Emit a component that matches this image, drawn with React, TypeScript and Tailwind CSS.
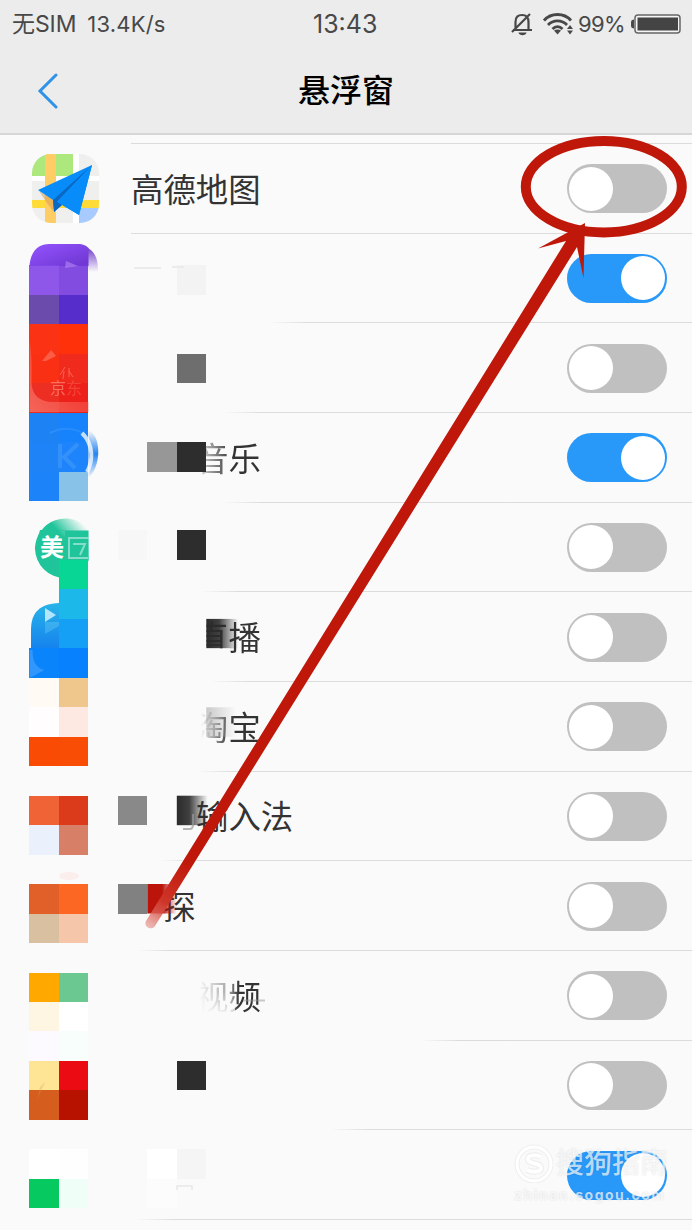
type Row = {
  label: string
  labelClass?: string
  on?: boolean
  line: string
}

const solidLine = 'ml-[131px] bg-[#dcdcdc]'

const rows: Row[] = [
  { label: '高德地图', line: solidLine },
  { label: '', on: true, line: 'ml-[268px] bg-linear-to-r from-transparent to-[#dcdcdc] to-[40px]' },
  { label: '', line: 'ml-[222px] bg-linear-to-r from-transparent to-[#dcdcdc] to-[40px]' },
  {
    label: '音乐',
    labelClass:
      'pl-[65px] bg-linear-to-r from-transparent from-[62px] to-[#333] to-[100px] bg-clip-text text-transparent',
    on: true,
    line: 'ml-[222px] bg-linear-to-r from-transparent to-[#dcdcdc] to-[40px]',
  },
  { label: '', line: 'ml-[200px] bg-linear-to-r from-transparent to-[#dcdcdc] to-[40px]' },
  {
    label: '直播',
    labelClass:
      'pl-[65px] bg-linear-to-r from-transparent from-[75px] to-[#333] to-[76px] bg-clip-text text-transparent',
    line: 'ml-[210px] bg-linear-to-r from-transparent to-[#dcdcdc] to-[40px]',
  },
  {
    label: '淘宝',
    labelClass:
      'pl-[65px] bg-linear-to-r from-transparent from-[70px] to-[#333] to-[98px] bg-clip-text text-transparent',
    line: 'ml-[195px] bg-linear-to-r from-transparent to-[#dcdcdc] to-[40px]',
  },
  { label: '输入法', labelClass: 'pl-[65px]', line: 'ml-[160px] bg-linear-to-r from-transparent to-[#dcdcdc] to-[30px]' },
  { label: '探', labelClass: 'pl-[32px]', line: 'ml-[138px] bg-linear-to-r from-transparent to-[#dcdcdc] to-[30px]' },
  {
    label: '视频',
    labelClass:
      'pl-[65px] bg-linear-to-r from-transparent from-[68px] via-[#333]/40 via-[96px] to-[#333] to-[108px] bg-clip-text text-transparent',
    line: 'ml-[420px] bg-linear-to-r from-transparent to-[#dcdcdc] to-[40px]',
  },
  { label: '', line: 'ml-[330px] bg-linear-to-r from-transparent to-[#dcdcdc] to-[40px]' },
  { label: '', on: true, line: 'ml-[135px] bg-linear-to-r from-transparent to-[#dcdcdc] to-[40px]' },
]

// mosaic cell size
const CELL = 29.47

// [column, row, colour, opacity]
const tiles: [number, number, string, number?][] = [
  [1, 9, '#8245e8', 0.9],
  [2, 9, '#7338dc', 0.9],
  [1, 10, '#6b4bac'],
  [2, 10, '#562ccb'],
  [1, 11, '#fb3213'],
  [2, 11, '#ff310a'],
  [1, 12, '#fa3014'],
  [2, 12, '#f02a1c'],
  [1, 13, '#ed2e22'],
  [2, 13, '#ed2119'],
  [1, 14, '#1d83f5'],
  [2, 14, '#1683fd'],
  [1, 15, '#1d83f7'],
  [2, 15, '#1e84fb'],
  [1, 16, '#1d83f9'],
  [2, 16, '#89c2e8'],
  [2, 19, '#07d694'],
  [2, 20, '#1cb8e9'],
  [2, 21, '#16a0f5'],
  [1, 22, '#0a84fb'],
  [2, 22, '#0781fd'],
  [1, 23, '#fffaf3'],
  [2, 23, '#efc68c'],
  [1, 24, '#fffdfe'],
  [2, 24, '#fde8e2'],
  [1, 25, '#fa4b05'],
  [2, 25, '#f94c04'],
  [1, 27, '#ef6337'],
  [2, 27, '#db3b1b'],
  [1, 28, '#ebf1fc'],
  [2, 28, '#d87f68'],
  [1, 30, '#e1602a'],
  [2, 30, '#fc6823'],
  [1, 31, '#d8c0a0'],
  [2, 31, '#f5c6aa'],
  [1, 33, '#ffa900'],
  [2, 33, '#6cc891'],
  [1, 34, '#fff5e3'],
  [2, 34, '#ffffff'],
  [1, 35, '#fcfaff'],
  [2, 35, '#f8fefb'],
  [1, 36, '#fde595'],
  [2, 36, '#eb0b12'],
  [1, 37, '#d55d1e'],
  [2, 37, '#b71100'],
  [1, 39, '#ffffff'],
  [2, 39, '#fffefe'],
  [1, 40, '#06c960'],
  [2, 40, '#effff8'],
  [6, 9, '#f3f3f3'],
  [6, 12, '#6e6e6e'],
  [5, 15, '#979797'],
  [6, 15, '#2d2d2d'],
  [4, 18, '#f7f7f7'],
  [6, 18, '#2d2d2d'],
  [4, 27, '#898989'],
  [4, 30, '#818181'],
  [6, 36, '#2d2d2d'],
  [5, 39, '#ffffff'],
  [5, 40, '#fcfcfc'],
  [6, 39, '#f5f5f5'],
]

function Toggle({ on }: { on?: boolean }) {
  return (
    <div
      className={
        on
          ? 'flex h-[49px] w-[100px] items-center justify-end rounded-full bg-[#2898f9] px-[2px]'
          : 'flex h-[49px] w-[100px] items-center justify-start rounded-full bg-[#c0c0c0] px-[2px]'
      }
    >
      <div className="size-[44px] rounded-full bg-white" />
    </div>
  )
}

function MapIcon() {
  return (
    <svg className="ml-[32px] h-[69px] w-[67px]" viewBox="0 0 67 69">
      <defs>
        <clipPath id="map-clip">
          <rect width="67" height="69" rx="19" />
        </clipPath>
      </defs>
      <g clipPath="url(#map-clip)">
        <rect width="67" height="69" fill="#efefed" />
        <rect width="42" height="22" fill="#ace87c" />
        <rect y="22" width="67" height="5" fill="#fff" />
        <rect x="0" y="46" width="67" height="8" fill="#ffdb38" />
        <rect x="47" y="54" width="20" height="15" fill="#a7cbff" />
        <path d="M13 0h11v69H13z" fill="#ffcc66" />
        <rect x="41" width="6" height="69" fill="#fff" />
      </g>
      <path d="M7 37l14 9v11l-6-8z" fill="#d69a48" opacity=".5" />
      <path d="M60 11L6 36l15 10 1 12 8-7 17 10z" fill="#078cfa" />
      <path d="M60 11L21 46l1 12 8-7-5-3z" fill="#0868c4" />
      <path d="M60 11L25 47.500l22 13.500z" fill="#078cfa" />
    </svg>
  )
}

function StatusBar() {
  return (
    <div className="relative flex h-[48px] items-center text-[#484848]">
      <span className="ml-[12px] text-[23px] tracking-[-0.1px]">无SIM</span>
      <span className="ml-[11px] text-[22px] tracking-[0.2px]">13.4K/s</span>
      <span className="absolute top-[6px] left-[313px] text-[25px]">13:43</span>
      <svg className="ml-auto h-[24px] w-[22px]" viewBox="0 0 22 24" fill="none" stroke="#484848" strokeWidth="2.200">
        <path d="M4.500 17V10C4.500 5 7 3 11 3c4 0 6.500 2 6.500 7v7M2 18h19M1 20L19 2" />
        <path d="M7.500 20.500h8c-.5 3.500-7.500 3.500-8 0z" fill="#484848" stroke="none" />
      </svg>
      <svg className="ml-[10px] h-[22px] w-[30px]" viewBox="0 0 30 22" fill="none" stroke="#484848" strokeWidth="2.800">
        <path d="M1 7.500C8-.5 21-.5 28 7.500M5 12c5-5.500 14-5.500 19 0M9.500 16c3-3 7-3 10 0" />
        <path d="M11 17.500c2-1.500 5-1.500 7 0l-3.500 4z" fill="#484848" stroke="none" />
        <path d="M24 16l3-4 3 4zM24 17.500l3 4 3-4z" fill="#484848" stroke="none" />
      </svg>
      <span className="ml-[5px] w-[48px] text-[22px] tracking-[-0.7px] whitespace-nowrap">99%</span>
      <svg className="mr-[11px] ml-[5px] h-[20px] w-[50px]" viewBox="0 0 50 20">
        <path d="M3 5.500C0 6 0 7 0 10s0 4 3 4.500z" fill="#484848" />
        <rect x="4" y="1" width="45" height="18" rx="3" fill="#f5f5f5" stroke="#666" strokeWidth="1.500" />
        <rect x="6.500" y="3.500" width="40.500" height="13" fill="#444" />
      </svg>
    </div>
  )
}

/* Censored icons and names, drawn on one mosaic grid */
function Mosaic() {
  return (
    <svg className="absolute inset-0" width="692" height="1230" viewBox="0 0 692 1230">
      <defs>
        <linearGradient id="purple" x1="0" y1="0" x2="1" y2="1">
          <stop offset="0" stopColor="#9453ff" />
          <stop offset="1" stopColor="#6c36cf" />
        </linearGradient>
        <linearGradient id="fade-down" x1="0" y1="0" x2="0" y2="1">
          <stop offset="0" stopColor="#7440cc" />
          <stop offset="1" stopColor="#7440cc" stopOpacity="0" />
        </linearGradient>
        <linearGradient id="green" gradientUnits="userSpaceOnUse" x1="62" y1="536" x2="80" y2="520">
          <stop offset="0" stopColor="#20c49a" />
          <stop offset="1" stopColor="#20c49a" stopOpacity="0" />
        </linearGradient>
        <linearGradient id="dark-fade">
          <stop offset="0" stopColor="#2b2b2b" />
          <stop offset=".4" stopColor="#2b2b2b" stopOpacity=".9" />
          <stop offset="1" stopColor="#2b2b2b" stopOpacity="0" />
        </linearGradient>
        <linearGradient id="gray-fade">
          <stop offset="0" stopColor="#b4b4b4" stopOpacity=".7" />
          <stop offset="1" stopColor="#b4b4b4" stopOpacity="0" />
        </linearGradient>
        <linearGradient id="sky" x1="0" y1="0" x2="0" y2="1">
          <stop offset="0" stopColor="#29b4e8" />
          <stop offset="1" stopColor="#1583ee" />
        </linearGradient>
        <linearGradient id="corner" x1="0" y1="1" x2="1" y2="0">
          <stop offset="0" stopColor="#ff9b91" />
          <stop offset="1" stopColor="#ee2e22" />
        </linearGradient>
        <linearGradient id="blue-edge" x1="0" y1="0" x2="0" y2="1">
          <stop offset="0" stopColor="#2584f0" stopOpacity="0" />
          <stop offset=".5" stopColor="#2584f0" />
          <stop offset="1" stopColor="#2584f0" stopOpacity="0" />
        </linearGradient>
        <linearGradient id="page-fade" x1="0" y1="0" x2="0" y2="1">
          <stop offset="0" stopColor="#fafafa" stopOpacity="0" />
          <stop offset="1" stopColor="#fafafa" stopOpacity=".9" />
        </linearGradient>
      </defs>

      <path d="M29.500 266c1-14 8-22 20-22h28c6 0 9 2 11 4v18z" fill="url(#purple)" />
      <path d="M88 248c8 5 10 12 10 24H88z" fill="url(#fade-down)" />
      <path d="M88.500 430c13 6 13 36 0 48z" fill="url(#blue-edge)" />

      <path d="M35 548a30.500 30.500 0 0 1 53.500-19v32A30.500 30.500 0 0 1 35 548z" fill="url(#green)" />
      <path d="M59 530.500h29.500v30H59zM35 548a30 30 0 0 0 30 30V530H40z" fill="#20c49a" />
      <path d="M31 648v-18c0-18 9-26 28-27v45z" fill="url(#sky)" />

      <g shapeRendering="crispEdges">
        {tiles.map(([col, row, fill, opacity]) => (
          <rect
            key={`${col}-${row}`}
            x={col * CELL}
            y={row * CELL}
            width={CELL}
            height={CELL}
            fill={fill}
            fillOpacity={opacity ?? 1}
          />
        ))}
      </g>

      <path d="M66 261l12 5-13 2z" fill="#b58af2" opacity=".6" />
      <path d="M29.500 340c3 18 2 30 2 42 0 13 8 20 22 20h35v10h-59z" fill="url(#corner)" opacity=".5" />
      <path d="M42 361l9-11 5 6-10 5z" fill="#ff7b66" opacity=".6" />
      <path d="M60 375l5-8M64 371l-1 8M69 368v9M69 371l4 6" stroke="#ff7b66" opacity=".7" fill="none" />
      <text x="50" y="394" fontSize="16" fill="#ff8d7b" opacity=".7">京</text>
      <text x="66" y="394" fontSize="16" fill="#ff8d7b" opacity=".3">东</text>

      <path d="M60 444v24M78 444l-14 13 11 11" stroke="#55a4fb" strokeWidth="4" fill="none" opacity=".4" />
      <path d="M82 433c12 12 11 28 5 39" stroke="#fff" strokeWidth="4" fill="none" opacity=".75" />
      <path d="M50 433c12-6 24-5 32 0" stroke="#55a4fb" strokeWidth="2" fill="none" opacity=".3" />

      <text x="40" y="556" fontSize="24" fontWeight="700" fill="#fff">美</text>
      <path d="M88.500 538H69v20h19M73 544h12l-5 11" stroke="#fff" strokeWidth="2" fill="none" opacity=".45" />
      <path d="M45 608l11 7-11 7z" fill="#d4f5ff" opacity=".8" />
      <path d="M45 622h14v4L45 634z" fill="#65c8f5" opacity=".4" />
      <path d="M29.500 678v-28h3c0 14 5 18 12 20z" fill="#6cb5ff" opacity=".4" />
      <path d="M37 1100l8-18-5 5z" fill="#d8a048" opacity=".3" />

      <rect x="206.300" y="618.900" width="32" height="29.500" fill="url(#dark-fade)" />
      <rect x="200" y="648.400" width="30" height="10" fill="#fafafa" />
      <rect x="206.300" y="707.300" width="30" height="29.500" fill="url(#gray-fade)" />
      <rect x="176.800" y="795.700" width="31" height="29.500" fill="url(#dark-fade)" />
      <path d="M183 829h7c2 0 3-2 3-5v-10" fill="none" stroke="#999" strokeWidth="2" opacity=".7" />
      <rect x="190" y="992" width="45" height="22" fill="url(#page-fade)" />
      <path d="M243 1000.500h22" stroke="#999" strokeWidth="2" opacity=".5" />
      <path d="M134 268h27M172 267h12" stroke="#ebebeb" strokeWidth="2" />
      <path d="M177 1190v-4h15v4" fill="none" stroke="#e8e8e8" strokeWidth="1.500" />
      <ellipse cx="69" cy="876" rx="10" ry="4" fill="#fbeeec" />
    </svg>
  )
}

/* Hand-drawn circle and arrow pointing at the first switch */
function Callout() {
  return (
    <svg className="absolute inset-0" width="692" height="1230" viewBox="0 0 692 1230">
      <defs>
        <linearGradient id="tail" gradientUnits="userSpaceOnUse" x1="148" y1="927" x2="188" y2="864">
          <stop offset="0" stopColor="#e68f88" stopOpacity=".6" />
          <stop offset=".4" stopColor="#cf3529" />
          <stop offset="1" stopColor="#bf180b" />
        </linearGradient>
        <linearGradient id="red-tile">
          <stop offset="0" stopColor="#bb140a" />
          <stop offset=".5" stopColor="#bb140a" />
          <stop offset="1" stopColor="#bb140a" stopOpacity="0" />
        </linearGradient>
      </defs>
      <rect x="147.300" y="884" width="29.500" height="29.500" fill="url(#red-tile)" />
      <path
        d="M566 241L538 248.500L585 223L583.500 278L577 247L155 926C152 931 143 927 146 921Z"
        fill="url(#tail)"
      />
      <ellipse cx="603.800" cy="186.700" rx="78" ry="45.700" fill="none" stroke="#bf180b" strokeWidth="10" />
    </svg>
  )
}

function Watermark() {
  return (
    <div className="absolute top-[1142px] left-[514px] w-[160px] text-white/70 [text-shadow:0_0_2px_#00000022]">
      <div className="flex h-[42px] items-center gap-[3px]">
        <svg className="size-[39px]" viewBox="0 0 39 39" fill="none" stroke="#fff">
          <circle cx="20" cy="20" r="17" stroke="#efefef" strokeWidth="5" />
          <circle cx="20" cy="20" r="17" strokeWidth="3" />
          <path d="M27 13c-3-2-13-3-13 2 0 6 13 3 13 9 0 5-10 4-14 2" stroke="#ececec" strokeWidth="6" />
          <path d="M27 13c-3-2-13-3-13 2 0 6 13 3 13 9 0 5-10 4-14 2" strokeWidth="4" />
        </svg>
        <span className="text-[28px] leading-[42px] font-medium whitespace-nowrap">搜狗指南</span>
      </div>
      <div className="text-[14px] leading-[22px] font-bold tracking-[1.5px] whitespace-nowrap">zhinan.sogou.com</div>
    </div>
  )
}

export default function App() {
  return (
    <div className="relative h-[1230px] w-[692px] overflow-hidden bg-[#fafafa] font-[Inter,'Noto_Sans_CJK_SC',sans-serif]">
      <header className="h-[135px] border-b-2 border-[#d6d6d6] bg-[#ececec]">
        <StatusBar />
        <div className="grid h-[85px] grid-cols-3 items-center">
          <svg className="ml-[37px] h-[36px] w-[22px]" viewBox="0 0 22 36" fill="none">
            <path d="M19 2L3 18l16 16" stroke="#2f92e6" strokeWidth="3" strokeLinecap="round" />
          </svg>
          <h1 className="text-center text-[32px] font-medium text-black">悬浮窗</h1>
        </div>
      </header>

      <main className="pt-[8px]">
        <div className="ml-[131px] h-px bg-[#dcdcdc]" />
        {rows.map((row, i) => (
          <div key={i} className="flex h-[89.67px] flex-col">
            <div className="flex flex-1 items-center pt-px">
              <div className="w-[131px]">{i === 0 && <MapIcon />}</div>
              <div className={`mt-[4px] text-[32.400px] leading-[48px] text-[#333] ${row.labelClass ?? ''}`}>
                {row.label}
              </div>
              <div className="mr-[25px] ml-auto">
                <Toggle on={row.on} />
              </div>
            </div>
            <div className={`h-px ${i === 0 ? solidLine : row.line}`} />
          </div>
        ))}
      </main>

      <Mosaic />
      <Callout />
      <Watermark />
    </div>
  )
}
